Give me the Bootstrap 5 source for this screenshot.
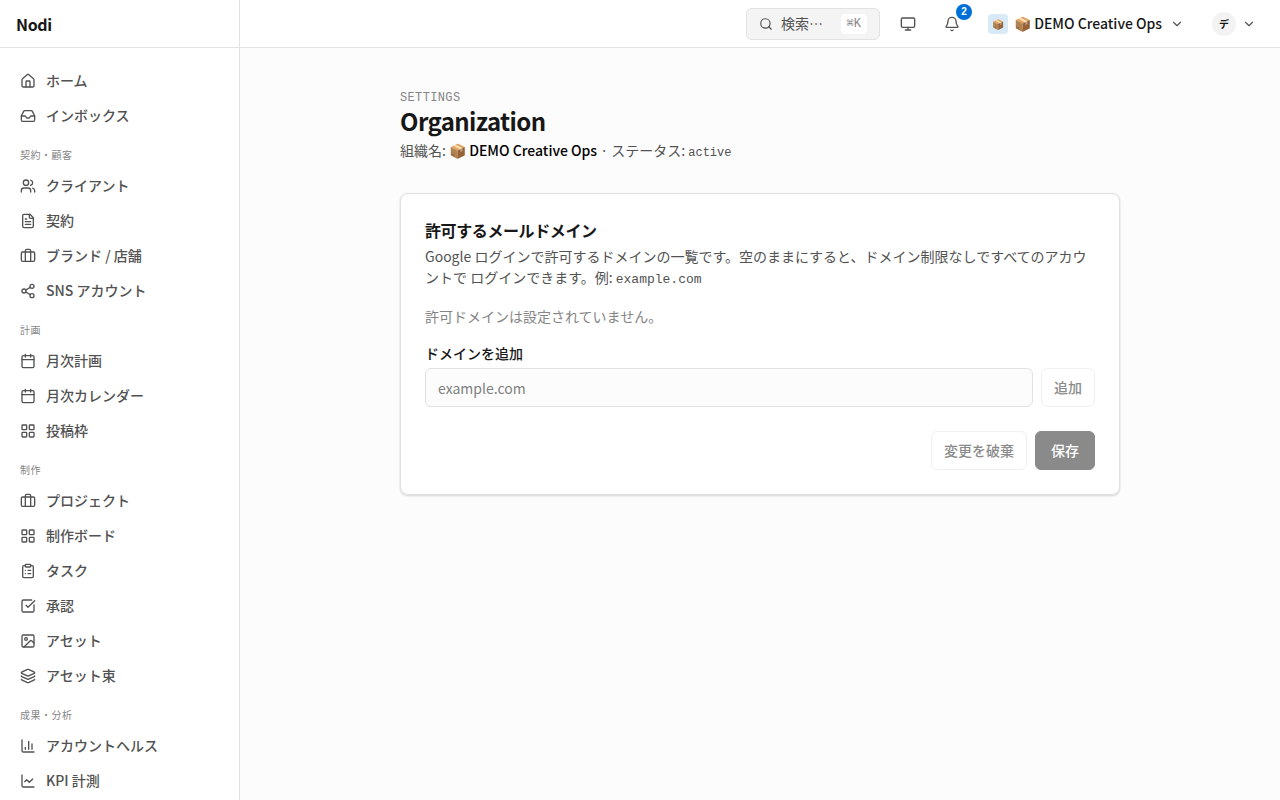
<!DOCTYPE html>
<html lang="ja">
<head>
<meta charset="utf-8">
<meta name="viewport" content="width=device-width, initial-scale=1">
<title>Organization · Nodi</title>
<link href="https://cdn.jsdelivr.net/npm/bootstrap@5.3.0/dist/css/bootstrap.min.css" rel="stylesheet">
<style>
  :root { --line: #e2e2e2; --ink: #171717; --ink-2: #525252; --ink-3: #858585; --canvas: #fcfcfc; }
  body { font-family: "Noto Sans CJK JP", sans-serif; font-size: 14px; line-height: 21px; color: var(--ink); background: var(--canvas); }
  .mono { font-family: "Liberation Mono", monospace; }
  .ico { width: 16px; height: 16px; flex: none; fill: none; stroke: currentColor; stroke-width: 2; stroke-linecap: round; stroke-linejoin: round; }
  .ico-sm { width: 14px; height: 14px; }

  .side { width: 240px; background: #fff; border-right: 1px solid var(--line); }
  .side-head, .topbar { height: 48px; border-bottom: 1px solid var(--line); background: #fff; flex: none; }
  .brand { font-size: 16px; line-height: 24px; font-weight: 600; letter-spacing: -.02em; color: var(--ink); }
  .side-nav { padding: 16px 12px; gap: 2px; overflow: hidden; }
  .side-link { display: flex; align-items: center; gap: 10px; padding: 6px 8px; color: var(--ink-2); font-weight: 500; text-decoration: none; border-radius: 6px; }
  .side-link:hover { background: #f3f3f3; }
  .side-label { font-size: 10px; line-height: 15px; letter-spacing: .05em; color: var(--ink-3); margin: 13px 8px 5px; }

  .topbar { padding: 0 16px; gap: 12px; }
  .search { width: 134px; height: 32px; padding: 0 12px; gap: 8px; background: #f4f4f4; border: 1px solid var(--line); border-radius: 6px; color: var(--ink-2); }
  .search kbd { display: flex; align-items: center; height: 20px; font-size: 12px; line-height: 16px; padding: 0 6px; background: #fff; color: var(--ink-3); border-radius: 4px; font-family: "Liberation Mono", "DejaVu Sans Mono", monospace; }
  .tool { width: 32px; height: 32px; padding: 0; background: none; border: 0; color: var(--ink-2); position: relative; }
  .count { position: absolute; top: -4px; right: -4px; width: 16px; height: 16px; border-radius: 8px; background: #0070d8; color: #fff; font: 700 10px/16px "Liberation Sans", sans-serif; }
  .plain { height: 32px; padding: 0 8px; gap: 6px; border: 0; background: none; color: var(--ink); font-weight: 500; white-space: nowrap; }
  .org-switch { min-width: 212px; }
  .org-tile { width: 20px; height: 20px; border-radius: 4px; background: #d8eaf8; font-size: 10px; line-height: 20px; }
  .avatar { width: 24px; height: 24px; border-radius: 12px; background: #f3f3f3; font-size: 10px; line-height: 24px; font-weight: 600; }

  .page { max-width: 752px; padding: 40px 16px; }
  .kicker { font-size: 12px; line-height: 20px; color: var(--ink-3); letter-spacing: .03em; }
  .page h1 { font-size: 24px; line-height: 26px; font-weight: 600; letter-spacing: -.025em; margin: 0 0 6px; }
  .org-line span { line-height: 1; }
  .status { font-size: 12px; }
  .panel { margin-top: 32px; padding: 24px; background: #fff; border: 1px solid var(--line); border-radius: 8px; box-shadow: 0 1px 3px rgba(0,0,0,.1), 0 1px 2px rgba(0,0,0,.06); }
  .panel h2 { font-size: 16px; line-height: 24px; font-weight: 600; letter-spacing: -.025em; margin: 0 0 4px; }
  .ink-2 { color: var(--ink-2); }
  .ink-3 { color: var(--ink-3); }
  .panel code { font-size: 13px; color: inherit; }
  .field { height: 39px; padding: 0 12px; font-size: 14px; background: var(--canvas); border: 1px solid var(--line); border-radius: 6px; }
  .field::placeholder { color: #808080; }
  .act { height: 39px; padding: 0 12px; font-size: 14px; line-height: 21px; font-weight: 500; border-radius: 6px; flex: none; }
  .act:disabled { opacity: 1; color: #8b8b8b; border-color: #f0f0f0; background: #fff; }
  .act-main { padding: 0 15px; }
  .act-main:disabled { background: #8a8a8a; border-color: #8a8a8a; color: #fff; }
</style>
</head>
<body>
<svg class="d-none" aria-hidden="true">
  <symbol id="i-home" viewBox="0 0 24 24"><path d="M15 21v-8a1 1 0 0 0-1-1h-4a1 1 0 0 0-1 1v8"/><path d="M3 10a2 2 0 0 1 .709-1.528l7-6a2 2 0 0 1 2.582 0l7 6A2 2 0 0 1 21 10v9a2 2 0 0 1-2 2H5a2 2 0 0 1-2-2z"/></symbol>
  <symbol id="i-inbox" viewBox="0 0 24 24"><path d="M22 12h-6l-2 3h-4l-2-3H2"/><path d="M5.45 5.11 2 12v6a2 2 0 0 0 2 2h16a2 2 0 0 0 2-2v-6l-3.45-6.89A2 2 0 0 0 16.76 4H7.24a2 2 0 0 0-1.79 1.11z"/></symbol>
  <symbol id="i-users" viewBox="0 0 24 24"><path d="M16 21v-2a4 4 0 0 0-4-4H6a4 4 0 0 0-4 4v2"/><circle cx="9" cy="7" r="4"/><path d="M22 21v-2a4 4 0 0 0-3-3.87"/><path d="M16 3.13a4 4 0 0 1 0 7.75"/></symbol>
  <symbol id="i-file" viewBox="0 0 24 24"><path d="M15 2H6a2 2 0 0 0-2 2v16a2 2 0 0 0 2 2h12a2 2 0 0 0 2-2V7z"/><path d="M14 2v4a2 2 0 0 0 2 2h4M10 9H8M16 13H8M16 17H8"/></symbol>
  <symbol id="i-case" viewBox="0 0 24 24"><path d="M16 20V4a2 2 0 0 0-2-2h-4a2 2 0 0 0-2 2v16"/><rect width="20" height="14" x="2" y="6" rx="2"/></symbol>
  <symbol id="i-share" viewBox="0 0 24 24"><circle cx="18" cy="5" r="3"/><circle cx="6" cy="12" r="3"/><circle cx="18" cy="19" r="3"/><path d="m8.59 13.51 6.83 3.98M15.41 6.51l-6.82 3.98"/></symbol>
  <symbol id="i-cal" viewBox="0 0 24 24"><path d="M8 2v4M16 2v4M3 10h18"/><rect width="18" height="18" x="3" y="4" rx="2"/></symbol>
  <symbol id="i-grid" viewBox="0 0 24 24"><rect width="7" height="7" x="3" y="3" rx="1"/><rect width="7" height="7" x="14" y="3" rx="1"/><rect width="7" height="7" x="14" y="14" rx="1"/><rect width="7" height="7" x="3" y="14" rx="1"/></symbol>
  <symbol id="i-clip" viewBox="0 0 24 24"><rect width="8" height="4" x="8" y="2" rx="1"/><path d="M16 4h2a2 2 0 0 1 2 2v14a2 2 0 0 1-2 2H6a2 2 0 0 1-2-2V6a2 2 0 0 1 2-2h2M12 11h4M12 16h4M8 11h.01M8 16h.01"/></symbol>
  <symbol id="i-check" viewBox="0 0 24 24"><path d="M21 10.5V19a2 2 0 0 1-2 2H5a2 2 0 0 1-2-2V5a2 2 0 0 1 2-2h12.5"/><path d="m9 11 3 3L22 4"/></symbol>
  <symbol id="i-image" viewBox="0 0 24 24"><rect width="18" height="18" x="3" y="3" rx="2"/><circle cx="9" cy="9" r="2"/><path d="m21 15-3.086-3.086a2 2 0 0 0-2.828 0L6 21"/></symbol>
  <symbol id="i-layers" viewBox="0 0 24 24"><path d="M12.83 2.18a2 2 0 0 0-1.66 0L2.6 6.08a1 1 0 0 0 0 1.83l8.58 3.91a2 2 0 0 0 1.66 0l8.58-3.9a1 1 0 0 0 0-1.83z"/><path d="M2 12a1 1 0 0 0 .58.91l8.6 3.91a2 2 0 0 0 1.65 0l8.58-3.9A1 1 0 0 0 22 12"/><path d="M2 17a1 1 0 0 0 .58.91l8.6 3.91a2 2 0 0 0 1.65 0l8.58-3.9A1 1 0 0 0 22 17"/></symbol>
  <symbol id="i-bars" viewBox="0 0 24 24"><path d="M3 3v16a2 2 0 0 0 2 2h16M18 17V9M13 17V5M8 17v-3"/></symbol>
  <symbol id="i-trend" viewBox="0 0 24 24"><path d="M3 3v16a2 2 0 0 0 2 2h16"/><path d="m19 9-5 5-4-4-3 3"/></symbol>
  <symbol id="i-search" viewBox="0 0 24 24"><circle cx="11" cy="11" r="8"/><path d="m21 21-4.3-4.3"/></symbol>
  <symbol id="i-monitor" viewBox="0 0 24 24"><rect width="20" height="14" x="2" y="3" rx="2"/><path d="M8 21h8M12 17v4"/></symbol>
  <symbol id="i-bell" viewBox="0 0 24 24"><path d="M10.268 21a2 2 0 0 0 3.464 0"/><path d="M3.262 15.326A1 1 0 0 0 4 17h16a1 1 0 0 0 .74-1.673C19.41 13.956 18 12.499 18 8A6 6 0 0 0 6 8c0 4.499-1.411 5.956-2.738 7.326"/></symbol>
  <symbol id="i-down" viewBox="0 0 24 24"><path d="m6 9 6 6 6-6"/></symbol>
</svg>

<div class="d-flex vh-100 overflow-hidden">
  <aside class="side d-flex flex-column flex-shrink-0">
    <div class="side-head d-flex align-items-center px-3"><a href="#" class="brand text-decoration-none">Nodi</a></div>
    <nav class="side-nav d-flex flex-column" aria-label="メイン">
      <a class="side-link" href="#"><svg class="ico"><use href="#i-home"/></svg>ホーム</a>
      <a class="side-link" href="#"><svg class="ico"><use href="#i-inbox"/></svg>インボックス</a>
      <div class="side-label">契約・顧客</div>
      <a class="side-link" href="#"><svg class="ico"><use href="#i-users"/></svg>クライアント</a>
      <a class="side-link" href="#"><svg class="ico"><use href="#i-file"/></svg>契約</a>
      <a class="side-link" href="#"><svg class="ico"><use href="#i-case"/></svg>ブランド / 店舗</a>
      <a class="side-link" href="#"><svg class="ico"><use href="#i-share"/></svg>SNS アカウント</a>
      <div class="side-label">計画</div>
      <a class="side-link" href="#"><svg class="ico"><use href="#i-cal"/></svg>月次計画</a>
      <a class="side-link" href="#"><svg class="ico"><use href="#i-cal"/></svg>月次カレンダー</a>
      <a class="side-link" href="#"><svg class="ico"><use href="#i-grid"/></svg>投稿枠</a>
      <div class="side-label">制作</div>
      <a class="side-link" href="#"><svg class="ico"><use href="#i-case"/></svg>プロジェクト</a>
      <a class="side-link" href="#"><svg class="ico"><use href="#i-grid"/></svg>制作ボード</a>
      <a class="side-link" href="#"><svg class="ico"><use href="#i-clip"/></svg>タスク</a>
      <a class="side-link" href="#"><svg class="ico"><use href="#i-check"/></svg>承認</a>
      <a class="side-link" href="#"><svg class="ico"><use href="#i-image"/></svg>アセット</a>
      <a class="side-link" href="#"><svg class="ico"><use href="#i-layers"/></svg>アセット束</a>
      <div class="side-label">成果・分析</div>
      <a class="side-link" href="#"><svg class="ico"><use href="#i-bars"/></svg>アカウントヘルス</a>
      <a class="side-link" href="#"><svg class="ico"><use href="#i-trend"/></svg>KPI 計測</a>
    </nav>
  </aside>

  <div class="d-flex flex-column flex-grow-1">
    <header class="topbar d-flex align-items-center justify-content-end">
      <button type="button" class="search d-flex align-items-center"><svg class="ico ico-sm"><use href="#i-search"/></svg>検索…<kbd class="ms-auto">⌘K</kbd></button>
      <button type="button" class="tool d-flex align-items-center justify-content-center" aria-label="表示"><svg class="ico"><use href="#i-monitor"/></svg></button>
      <button type="button" class="tool d-flex align-items-center justify-content-center" aria-label="通知"><svg class="ico"><use href="#i-bell"/></svg><span class="count">2</span></button>
      <button type="button" class="plain org-switch d-flex align-items-center"><span class="org-tile text-center">📦</span><span>📦 DEMO Creative Ops</span><svg class="ico ico-sm ink-2 ms-auto"><use href="#i-down"/></svg></button>
      <button type="button" class="plain d-flex align-items-center" aria-label="アカウント"><span class="avatar text-center">デ</span><svg class="ico ico-sm ink-2"><use href="#i-down"/></svg></button>
    </header>

    <main class="flex-grow-1 overflow-auto">
      <div class="page mx-auto">
        <div class="kicker mono">SETTINGS</div>
        <h1>Organization</h1>
        <div class="org-line ink-2">組織名: <span class="fw-medium text-black">📦 DEMO Creative Ops</span> · ステータス: <span class="mono status">active</span></div>

        <section class="panel">
          <h2>許可するメールドメイン</h2>
          <p class="ink-2 mb-3">Google ログインで許可するドメインの一覧です。空のままにすると、ドメイン制限なしですべてのアカウントで ログインできます。例: <code class="mono">example.com</code></p>
          <p class="ink-3 mb-3">許可ドメインは設定されていません。</p>
          <label class="d-block fw-medium mb-1" for="domain">ドメインを追加</label>
          <div class="d-flex gap-2 mb-4">
            <input id="domain" type="text" class="form-control field" placeholder="example.com">
            <button type="button" class="btn act" disabled>追加</button>
          </div>
          <div class="d-flex justify-content-end gap-2">
            <button type="button" class="btn act" disabled>変更を破棄</button>
            <button type="button" class="btn act act-main" disabled>保存</button>
          </div>
        </section>
      </div>
    </main>
  </div>
</div>
<script src="https://cdn.jsdelivr.net/npm/bootstrap@5.3.0/dist/js/bootstrap.bundle.min.js"></script>
</body>
</html>
